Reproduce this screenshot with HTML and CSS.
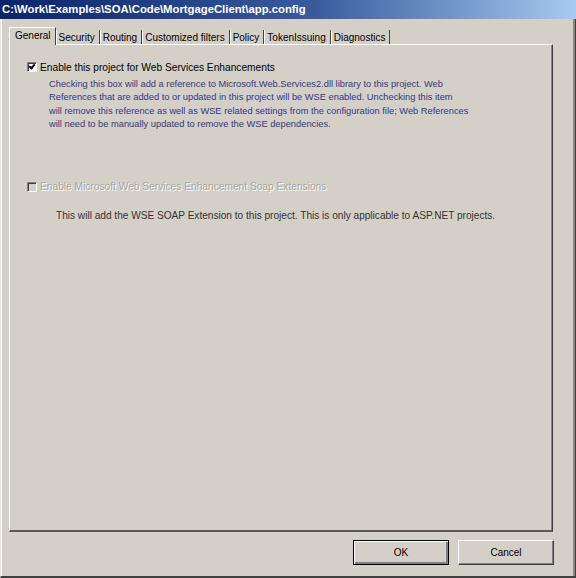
FILE: index.html
```html
<!DOCTYPE html>
<html lang="en">
  <head>
    <meta charset="UTF-8" />
    <title>app.config</title>
    <link rel="stylesheet" href="styles.css">
  </head>
  <body>
    <div class="window">
      <div class="titlebar">C:\Work\Examples\SOA\Code\MortgageClient\app.config</div>
      <div class="tabs">
        <div class="tab active">General</div>
        <div class="tab">Security</div>
        <div class="tab">Routing</div>
        <div class="tab">Customized filters</div>
        <div class="tab">Policy</div>
        <div class="tab">TokenIssuing</div>
        <div class="tab">Diagnostics</div>
      </div>
      <div class="panel">
        <label class="check">
          <span class="box checked"></span>
          Enable this project for Web Services Enhancements
        </label>
        <p class="desc blue">
          Checking this box will add a reference to Microsoft.Web.Services2.dll library to this project. Web<br>
          References that are added to or updated in this project will be WSE enabled. Unchecking this item<br>
          will remove this reference as well as WSE related settings from the configuration file; Web References<br>
          will need to be manually updated to remove the WSE dependencies.
        </p>
        <label class="check disabled">
          <span class="box"></span>
          Enable Microsoft Web Services Enhancement Soap Extensions
        </label>
        <p class="desc gray">
          This will add the WSE SOAP Extension to this project. This is only applicable to ASP.NET projects.
        </p>
      </div>
      <div class="buttons">
        <button class="default">OK</button>
        <button>Cancel</button>
      </div>
    </div>
  </body>
</html>
```
FILE: styles.css
```css
body {
  margin: 0;
  font-family: "Liberation Sans", Arial, sans-serif;
  background: #d4d0c8;
}
.window {
  width: 576px;
  height: 578px;
  box-sizing: border-box;
  display: flex;
  flex-direction: column;
  background: #d4d0c8;
  border-left: 1px solid #e8e6e1;
  border-right: 1px solid #404040;
  border-bottom: 2px solid #404040;
  box-shadow: inset 1px 0 0 #fff, inset -2px 0 0 #8a8782;
}
.titlebar {
  height: 19px;
  line-height: 19px;
  padding-left: 2px;
  margin-left: -1px;
  margin-right: -1px;
  color: #fff;
  font-weight: bold;
  font-size: 11.3px;
  background: linear-gradient(to right, #0a246a 0%, #3a5c9e 55%, #a6caf0 100%);
}
.tabs {
  display: flex;
  align-items: flex-end;
  height: 18px;
  margin: 7px 0 0 8px;
  font-size: 10px;
  color: #000;
}
.tab {
  height: 14px;
  line-height: 15px;
  padding: 0 4px 0 3px;
  overflow: hidden;
  border-right: 1px solid #404040;
  box-shadow: inset 1px 0 0 #fff;
}
.tab.active {
  height: 17px;
  line-height: 16px;
  padding: 0 4px 0 5px;
  margin-bottom: -1px;
  position: relative;
  z-index: 1;
  background: #d4d0c8;
  border-top: 1px solid #fff;
  border-left: 1px solid #fff;
  box-shadow: none;
}
.panel {
  flex: 1;
  margin: 0 22px 0 8px;
  padding: 15px 0 0 17px;
  border-top: 1px solid #fff;
  border-left: 1px solid #fff;
  border-right: 1px solid #404040;
  border-bottom: 2px solid #5a5855;
  box-shadow: inset -1px 0 0 #8a8782;
}
.check {
  display: flex;
  align-items: center;
  gap: 3px;
  height: 14px;
  font-size: 10.2px;
  color: #000;
}
.box {
  width: 8px;
  height: 8px;
  background: #fff;
  border-top: 1px solid #808080;
  border-left: 1px solid #808080;
  border-right: 1px solid #fff;
  border-bottom: 1px solid #fff;
  box-shadow: inset 1px 1px 0 #404040;
  position: relative;
}
.box.checked::after {
  content: "";
  position: absolute;
  left: 2px;
  top: 0px;
  width: 2px;
  height: 4px;
  border: solid #000;
  border-width: 0 2px 2px 0;
  transform: rotate(40deg);
}
.check.disabled {
  margin-top: 48px;
  color: #a8a59f;
  text-shadow: 1px 1px 0 #fff;
}
.check.disabled .box {
  background: #d4d0c8;
}
.desc {
  margin: 4px 0 0 22px;
  line-height: 13.4px;
}
.desc.blue {
  font-size: 9.3px;
  color: #33377f;
}
.desc.gray {
  margin: 15px 0 0 29px;
  font-size: 10.1px;
  color: #333;
}
.buttons {
  display: flex;
  justify-content: flex-end;
  gap: 9px;
  height: 44px;
  padding: 8px 21px 0 0;
  box-sizing: border-box;
}
button {
  width: 96px;
  height: 25px;
  font-family: "Liberation Sans", Arial, sans-serif;
  font-size: 10px;
  color: #000;
  background: #d4d0c8;
  border: 1px solid;
  border-color: #fff #404040 #404040 #fff;
  box-shadow: inset -1px -1px 0 #808080;
  padding: 0;
}
button.default {
  border: 1px solid #000;
  box-shadow: inset 1px 1px 0 #fff, inset -2px -2px 0 #808080;
}
```
